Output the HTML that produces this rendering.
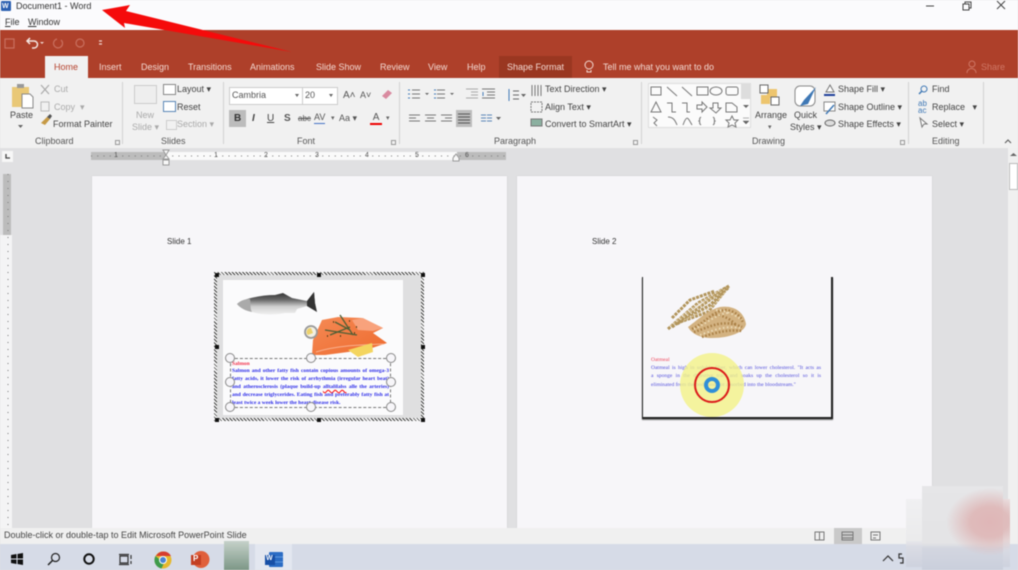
<!DOCTYPE html>
<html><head><meta charset="utf-8"><style>
html,body{margin:0;padding:0}
body{width:1018px;height:570px;overflow:hidden;position:relative;background:#e0e0e2;font-family:"Liberation Sans",sans-serif;font-size:9px;color:#444}
#w{position:absolute;left:0;top:0;width:1018px;height:570px;overflow:hidden;filter:blur(.4px)}
.a{position:absolute;white-space:nowrap;line-height:11px}
.b{position:absolute}
.tab{position:absolute;top:62px;color:#f3d9d2;font-size:9px;line-height:11px;white-space:nowrap}
.g{position:absolute;top:136px;color:#555;font-size:9px;line-height:11px}
.sep{position:absolute;top:82px;width:1px;height:62px;background:#d2d2d2}
.p{position:absolute;top:176px;width:415px;height:352px;background:#f7f6f9;box-shadow:0 0 1px #bbb}
.h{position:absolute;width:8px;height:8px;border-radius:50%;border:1.5px solid #888;background:#f7f6f9}
.k{position:absolute;width:4px;height:4px;background:#111}
.j{display:block;text-align:justify;text-align-last:justify}
.dl{position:absolute;width:5px;height:5px;top:140px;border:1px solid #999;box-sizing:border-box}
svg{position:absolute;overflow:visible}
</style></head><body><div id="w">

<div class="b" style="left:0;top:0;width:1018px;height:30px;background:#fbfbfd"></div>
<div class="b" style="left:1px;top:1px;width:10px;height:10px;background:#2b5fb0;border-radius:1px"></div>
<div class="a" style="left:2px;top:1px;color:#fff;font-size:7px;font-weight:bold">W</div>
<div class="a" style="left:16px;top:1px;font-size:9px;color:#333">Document1 - Word</div>
<div class="a" style="left:5px;top:17px;font-size:9px;color:#333"><u>F</u>ile</div>
<div class="a" style="left:28px;top:17px;font-size:9px;color:#333"><u>W</u>indow</div>
<svg style="left:925px;top:0" width="90" height="12"><path d="M1 6H9" stroke="#444"/><path d="M38 4h6v6h-6zM40 4V2h6v6h-2" fill="none" stroke="#444"/><path d="M72 1l8 8M80 1l-8 8" stroke="#444"/></svg>

<div class="b" style="left:0;top:30px;width:1018px;height:48px;background:#ae402a"></div>
<svg style="left:0;top:34px" width="110" height="18"><rect x="5" y="5" width="9" height="9" fill="none" stroke="#c9705f" stroke-width="1.2"/><path d="M28 7h6a3.500 3.500 0 0 1 0 7h-2M30 4l-3 3 3 3" fill="none" stroke="#f4e6e2" stroke-width="1.500"/><path d="M40 8h4l-2 2z" fill="#f0d5cf"/><path d="M61 6a4.500 4.500 0 1 1-4-1" fill="none" stroke="#c9705f" stroke-width="1.2"/><circle cx="80" cy="9" r="4" fill="none" stroke="#c9705f" stroke-width="1.2"/><path d="M99 7h3M99 10h3" stroke="#f0d5cf" stroke-width="1.3"/></svg>
<div class="b" style="left:45px;top:56px;width:43px;height:22px;background:#f1f1f1"></div>
<div class="tab" style="left:54px;color:#b5432e">Home</div>
<div class="tab" style="left:99px">Insert</div>
<div class="tab" style="left:141px">Design</div>
<div class="tab" style="left:188px">Transitions</div>
<div class="tab" style="left:250px">Animations</div>
<div class="tab" style="left:316px">Slide Show</div>
<div class="tab" style="left:380px">Review</div>
<div class="tab" style="left:428px">View</div>
<div class="tab" style="left:467px">Help</div>
<div class="b" style="left:499px;top:56px;width:73px;height:22px;background:#9a3721"></div>
<div class="tab" style="left:507px">Shape Format</div>
<svg style="left:583px;top:60px" width="12" height="14"><circle cx="6" cy="5" r="4" fill="none" stroke="#f3d9d2"/><path d="M4 10v2h4v-2" fill="none" stroke="#f3d9d2"/></svg>
<div class="tab" style="left:603px">Tell me what you want to do</div>
<svg style="left:966px;top:60px" width="13" height="14"><circle cx="6" cy="4" r="3" fill="none" stroke="#cf7766"/><path d="M1 13c0-6 9-6 9 0" fill="none" stroke="#cf7766"/></svg>
<div class="tab" style="left:981px;color:#cf7766">Share</div>

<div class="b" style="left:0;top:78px;width:1018px;height:70px;background:#f1f1f1"></div>
<div class="sep" style="left:122px"></div><div class="sep" style="left:223px"></div><div class="sep" style="left:399px"></div><div class="sep" style="left:641px"></div><div class="sep" style="left:908px"></div><div class="sep" style="left:983px"></div>

<svg style="left:10px;top:84px" width="24" height="26"><rect x="2" y="3" width="17" height="20" fill="#e9c877"/><rect x="7" y="0" width="7" height="4" fill="#999"/><path d="M12 10h8l3 3v11H12z" fill="#fff" stroke="#888"/></svg>
<div class="a" style="left:10px;top:110px;color:#444">Paste</div>
<svg style="left:18px;top:125px" width="6" height="4"><path d="M0 0h5L2.500 3z" fill="#666"/></svg>
<svg style="left:39px;top:84px" width="14" height="40"><path d="M2 1l8 9M10 1L2 10" stroke="#aaa" stroke-width="1.2"/><rect x="2" y="18" width="8" height="9" fill="none" stroke="#bbb"/><path d="M2 39l6-6 3 2-5 6z" fill="#c69a45"/><path d="M8 33l3-3 2 2-2 3z" fill="#555"/></svg>
<div class="a" style="left:54px;top:84px;color:#aaa">Cut</div>
<div class="a" style="left:54px;top:102px;color:#aaa">Copy &nbsp;▾</div>
<div class="a" style="left:53px;top:119px;color:#444">Format Painter</div>
<div class="g" style="left:35px">Clipboard</div>
<div class="dl" style="left:115px"></div>

<div class="b" style="left:134px;top:85px;width:21px;height:17px;background:#eee;border:1px solid #ccc"></div>
<div class="a" style="left:136px;top:110px;color:#aaa">New</div>
<div class="a" style="left:132px;top:122px;color:#aaa">Slide ▾</div>
<div class="b" style="left:163px;top:84px;width:11px;height:9px;border:1px solid #888;background:#fff"></div>
<div class="a" style="left:177px;top:84px;color:#444">Layout ▾</div>
<div class="b" style="left:163px;top:101px;width:11px;height:9px;border:1px solid #5a87b8;background:#fff"></div>
<div class="a" style="left:177px;top:102px;color:#444">Reset</div>
<div class="b" style="left:166px;top:120px;width:9px;height:8px;border:1px solid #ccc"></div>
<div class="a" style="left:177px;top:119px;color:#aaa">Section ▾</div>
<div class="g" style="left:161px">Slides</div>

<div class="b" style="left:229px;top:87px;width:72px;height:16px;background:#fff;border:1px solid #ccc"></div>
<div class="a" style="left:232px;top:90px;color:#555">Cambria</div>
<div class="b" style="left:302px;top:87px;width:34px;height:16px;background:#fff;border:1px solid #ccc"></div>
<div class="a" style="left:305px;top:90px;color:#555">20</div>
<svg style="left:295px;top:94px" width="40" height="4"><path d="M0 0h4L2 3zM34 0h4l-2 3z" fill="#666"/></svg>
<div class="a" style="left:343px;top:90px;color:#555;font-size:10px">A˄</div>
<div class="a" style="left:360px;top:90px;color:#555;font-size:9px">A˅</div>
<svg style="left:380px;top:88px" width="13" height="13"><path d="M2 8l6-6 4 3-6 6z" fill="#d98aa0"/></svg>
<div class="b" style="left:229px;top:110px;width:17px;height:17px;background:#bcbcbc"></div>
<div class="a" style="left:234px;top:113px;font-weight:bold;color:#333;font-size:10px">B</div>
<div class="a" style="left:252px;top:113px;font-style:italic;font-weight:bold;color:#444;font-size:10px">I</div>
<div class="a" style="left:267px;top:113px;text-decoration:underline;color:#444;font-size:10px">U</div>
<div class="a" style="left:284px;top:113px;font-weight:bold;color:#555;font-size:10px">S</div>
<div class="a" style="left:298px;top:113px;color:#555;text-decoration:line-through;font-size:8px">abc</div>
<div class="a" style="left:314px;top:112px;color:#555;font-size:9px;border-bottom:1px solid #4472c4">AV</div>
<div class="a" style="left:331px;top:113px;color:#666;font-size:7px">▾</div>
<div class="a" style="left:339px;top:113px;color:#555">Aa ▾</div>
<div class="a" style="left:370px;top:112px;color:#555;font-size:10px;border-bottom:2px solid #e00">&nbsp;A&nbsp;</div>
<div class="a" style="left:386px;top:113px;color:#666;font-size:7px">▾</div>
<div class="g" style="left:297px">Font</div>
<div class="dl" style="left:391px"></div>

<svg style="left:406px;top:87px" width="125" height="40" fill="none" stroke="#777">
<path d="M6 3h8M6 7h8M6 11h8M31 3h8M31 7h8M31 11h8"/>
<path d="M2 3h2M2 7h2M2 11h2M28 3h2M28 7h2M28 11h2" stroke="#3f78b5"/>
<path d="M19 6h4l-2 2zM44 6h4l-2 2z" fill="#666" stroke="none"/>
<path d="M60 2h12M65 5h7M65 8h7M60 11h12" stroke="#aaa"/>
<path d="M76 2h13M81 5h8M81 8h8M76 11h13"/><path d="M77 5v4" stroke="#3f78b5"/>
<path d="M3 28h11M3 31h7M3 34h11M19 28h11M21 31h7M19 34h11M35 28h11M39 31h7M35 34h11"/>
</svg>
<div class="b" style="left:456px;top:110px;width:16px;height:17px;background:#bcbcbc"></div>
<svg style="left:458px;top:113px" width="12" height="11"><path d="M0 1h12M0 4h12M0 7h12M0 10h12" stroke="#555"/></svg>
<svg style="left:481px;top:113px" width="22" height="11"><path d="M0 2h5M6 2h5M0 5h5M6 5h5M0 8h5M6 8h5" stroke="#5a87b8"/><path d="M15 4h5l-2.500 3z" fill="#666"/></svg>
<svg style="left:506px;top:88px" width="20" height="14"><path d="M3 1v12" stroke="#3f78b5"/><path d="M7 3h6M7 7h6M7 11h6" stroke="#666"/><path d="M15 6h5l-2.500 3z" fill="#666"/></svg>
<svg style="left:530px;top:83px" width="14" height="46" fill="none" stroke="#777"><path d="M2 2v11M5 2v11M8 2v11M11 2v11"/><rect x="1" y="19" width="11" height="10" stroke-dasharray="2 1"/><rect x="1" y="36" width="11" height="7" fill="#8bb0a0"/></svg>
<div class="a" style="left:545px;top:84px;color:#444">Text Direction ▾</div>
<div class="a" style="left:545px;top:102px;color:#444">Align Text ▾</div>
<div class="a" style="left:545px;top:119px;color:#444">Convert to SmartArt ▾</div>
<div class="g" style="left:494px">Paragraph</div>
<div class="dl" style="left:633px"></div>

<div class="b" style="left:648px;top:83px;width:103px;height:45px;background:#fbfbfb;border:1px solid #ddd;box-sizing:border-box"></div>
<div class="b" style="left:741px;top:84px;width:9px;height:15px;background:#ddd"></div>
<svg style="left:650px;top:85px" width="100" height="44" fill="none" stroke="#777">
<rect x="1" y="2" width="10" height="8"/><path d="M17 2l10 9M32 2l10 9"/><rect x="47" y="2" width="11" height="8"/><ellipse cx="66" cy="6" rx="6" ry="4"/><rect x="76" y="2" width="12" height="8" rx="2"/>
<path d="M1 27l5-10 5 10zM17 18h5v9h4M32 18h5v9h3M47 20h5v-3l5 5-5 5v-3h-5zM63 18h5v5h3l-5 5-6-5h3zM76 27v-9h6l5 4v5z"/>
<path d="M3 32l4 3-3 3 3 3M18 32c5 0 7 3 9 8M33 40c4-11 5-7 9 0M51 32c-3 2 0 3-2 4 2 1-1 2 2 4M63 32c3 2 0 3 2 4-2 1 1 2-2 4M82 31l2 4 4 0-3 3 1 4-4-2-4 2 1-4-3-3 4 0z"/></svg>
<svg style="left:742px;top:100px" width="8" height="28"><path d="M1 5h6L4 8z" fill="#666"/><path d="M1 18h6M1 21h6L4 24z" fill="#666" stroke="#666" stroke-width=".5"/></svg>
<svg style="left:758px;top:84px" width="24" height="24"><rect x="9" y="5" width="10" height="9" fill="#edc56e"/><rect x="3" y="11" width="9" height="9" fill="#edc56e"/><rect x="2" y="1" width="8" height="8" fill="#fff" stroke="#666"/><rect x="13" y="13" width="8" height="8" fill="#fff" stroke="#666"/></svg>
<div class="a" style="left:755px;top:110px;color:#444">Arrange</div>
<div class="a" style="left:768px;top:122px;color:#666;font-size:7px">▾</div>
<svg style="left:794px;top:85px" width="24" height="24"><rect x="1" y="1" width="20" height="20" rx="5" fill="#fff" stroke="#888"/><path d="M22 2L10 15l-4 6 8-2z" fill="#3f78b5"/></svg>
<div class="a" style="left:794px;top:110px;color:#444">Quick</div>
<div class="a" style="left:790px;top:122px;color:#444">Styles ▾</div>
<svg style="left:823px;top:83px" width="14" height="46" fill="none"><path d="M3 9l4-7 4 7z" stroke="#777" fill="#fff"/><path d="M1 12h11" stroke="#1f3f9a" stroke-width="2"/><rect x="1" y="19" width="11" height="9" stroke="#888" fill="#fff"/><path d="M3 31l8-9" stroke="#3f78b5" stroke-width="1.500"/><ellipse cx="7" cy="40" rx="5" ry="3" fill="#ddd" stroke="#666"/></svg>
<div class="a" style="left:838px;top:84px;color:#444">Shape Fill ▾</div>
<div class="a" style="left:838px;top:102px;color:#444">Shape Outline ▾</div>
<div class="a" style="left:838px;top:119px;color:#444">Shape Effects ▾</div>
<div class="g" style="left:752px">Drawing</div>
<div class="dl" style="left:900px"></div>

<svg style="left:917px;top:84px" width="14" height="46" fill="none"><circle cx="7" cy="5" r="3" stroke="#3f78b5"/><path d="M5 7L2 10" stroke="#3f78b5" stroke-width="1.500"/><path d="M3 34l2 9 2-3 3 0z" stroke="#777" fill="#fff"/></svg>
<div class="a" style="left:918px;top:100px;color:#3f78b5;font-size:8px;line-height:7px">ab<br>ac</div>
<div class="a" style="left:932px;top:84px;color:#444">Find</div>
<div class="a" style="left:932px;top:102px;color:#444">Replace &nbsp; ▾</div>
<div class="a" style="left:932px;top:119px;color:#444">Select ▾</div>
<div class="g" style="left:932px">Editing</div>
<svg style="left:1004px;top:139px" width="8" height="5"><path d="M1 4l3-3 3 3" stroke="#555" fill="none"/></svg>

<div class="b" style="left:0;top:148px;width:1018px;height:382px;background:#e0e0e2"></div>
<div class="b" style="left:2px;top:151px;width:11px;height:11px;background:#f7f7f7"></div>
<svg style="left:5px;top:154px" width="6" height="6"><path d="M1 0v4h4" stroke="#444" fill="none" stroke-width="1.300"/></svg>
<div class="b" style="left:91px;top:152px;width:415px;height:8px;background:#fafafa"></div>
<div class="b" style="left:91px;top:152px;width:75px;height:8px;background:#bcbcbc"></div>
<div class="b" style="left:457px;top:152px;width:49px;height:8px;background:#bcbcbc"></div>
<div class="a" style="left:114px;top:151px;font-size:7px;color:#555;line-height:10px">1</div>
<div class="a" style="left:214px;top:151px;font-size:7px;color:#555;line-height:10px">1</div>
<div class="a" style="left:264px;top:151px;font-size:7px;color:#555;line-height:10px">2</div>
<div class="a" style="left:315px;top:151px;font-size:7px;color:#555;line-height:10px">3</div>
<div class="a" style="left:365px;top:151px;font-size:7px;color:#555;line-height:10px">4</div>
<div class="a" style="left:415px;top:151px;font-size:7px;color:#555;line-height:10px">5</div>
<div class="a" style="left:465px;top:151px;font-size:7px;color:#555;line-height:10px">6</div>
<svg style="left:91px;top:155px" width="415" height="2"><path d="M0 1H415" stroke="#777" stroke-dasharray="1 5.250"/></svg>
<svg style="left:162px;top:149px" width="9" height="17"><path d="M1 1h6L4 6zM4 6l3 4H1z" fill="#f8f8f8" stroke="#999"/><rect x="1" y="11" width="6" height="5" fill="#f8f8f8" stroke="#999"/></svg>
<svg style="left:452px;top:153px" width="9" height="9"><path d="M4 1l3 4v3H1V5z" fill="#f8f8f8" stroke="#999"/></svg>

<div class="b" style="left:0;top:235px;width:12px;height:293px;background:#f4f4f5"></div>
<div class="b" style="left:3px;top:174px;width:8px;height:61px;background:#bcbcbc"></div>
<svg style="left:7px;top:174px" width="2" height="354"><path d="M1 0V354" stroke="#777" stroke-dasharray="1 6"/></svg>

<div class="b" style="left:1008px;top:148px;width:10px;height:380px;background:#f0f0f0"></div>
<div class="b" style="left:1009px;top:163px;width:9px;height:27px;background:#fff;border:1px solid #bbb;box-sizing:border-box"></div>
<svg style="left:1010px;top:152px" width="7" height="5"><path d="M0 4l3.500-3 3.500 3z" fill="#666"/></svg>

<div class="p" style="left:92px"></div>
<div class="p" style="left:517px"></div>
<div class="a" style="left:167px;top:236px;font-size:8px;color:#333">Slide 1</div>
<div class="a" style="left:592px;top:236px;font-size:8px;color:#333">Slide 2</div>

<!-- slide 1 -->
<div class="b" style="left:216px;top:274px;width:207px;height:146px;background:#dfdfe0"></div>
<div class="b" style="left:214px;top:272px;width:210px;height:149px;box-sizing:border-box;border:3px solid transparent;border-image:repeating-linear-gradient(45deg,#444 0 1px,#f5f5f5 1px 2.500px) 3"></div>
<div class="k" style="left:215px;top:273px"></div><div class="k" style="left:317px;top:273px"></div><div class="k" style="left:421px;top:273px"></div>
<div class="k" style="left:215px;top:345px"></div><div class="k" style="left:421px;top:345px"></div>
<div class="k" style="left:215px;top:418px"></div><div class="k" style="left:317px;top:418px"></div><div class="k" style="left:421px;top:418px"></div>
<div class="b" style="left:223px;top:280px;width:180px;height:135px;background:#fbfbfc"></div>
<svg style="left:0;top:0" width="1018" height="570"><defs><linearGradient id="f" x1="0" y1="0" x2="0" y2="1"><stop offset="0" stop-color="#2e2e2e"/><stop offset=".35" stop-color="#6a6a6a"/><stop offset=".65" stop-color="#d0d0d0"/><stop offset="1" stop-color="#f0f0f0"/></linearGradient>
<linearGradient id="sm" x1="0" y1="0" x2="1" y2="1"><stop offset="0" stop-color="#f58a55"/><stop offset="1" stop-color="#ee6a2e"/></linearGradient></defs>
<path d="M237 304C245 298 262 295 275 295L283 293 292 298 307 301 314 292 315 303 317 312 307 306 297 309 295 313 285 313C270 316 250 315 237 304z" fill="url(#f)"/>
<path d="M237 304C241 300 246 299 250 299 251 305 250 309 252 312 246 311 240 308 237 304z" fill="#aaa"/>
<path d="M307 301L314 292 315 303 317 312 307 306z" fill="#333"/>
<path d="M312 355L313 340 322 320 338 317 362 318 383 328 373 333 387 343 372 348 348 352 325 355z" fill="url(#sm)"/>
<path d="M352 320L363 318 383 328 373 331 358 330z" fill="#f8a27c"/>
<path d="M316 352C335 346 355 345 384 344" stroke="#f9b18f" fill="none"/>
<path d="M348 350L372 343 373 352 358 357z" fill="#f4d55f"/>
<path d="M325 330L357 335M340 315L353 335M335 322L350 330M330 335L350 327" stroke="#4f5f35" stroke-width="1.300"/>
<path d="M333 322h1M349 321h1M356 327h1M327 336h1M340 336h1M354 333h1" stroke="#331" stroke-width="1.500"/>
<circle cx="311" cy="332" r="6" fill="#f3f0e4" stroke="#999" stroke-width="1.800"/>
<path d="M311 328a4 4 0 0 0-3 7l5-2z" fill="#ecd16d"/>
<!-- wheat -->
<g fill="none">
<path d="M668 329L698 303 729 286M672 327L704 304 729 286M677 324L710 305 729 287M672 318L690 300 715 291M680 322L708 312 725 291" stroke="#b2955c" stroke-width="3" stroke-dasharray="3 1"/>
<path d="M670 326L700 306 727 288M676 320L700 303 722 289M684 320L712 307 726 291" stroke="#dcc79c" stroke-width="1.200" stroke-dasharray="2 2"/>
<path d="M688 327C700 318 708 310 720 307 734 305 744 312 746 324 745 332 730 338 712 338 700 338 692 334 688 327z" fill="#d3b281"/>
<path d="M692 329C706 322 712 312 724 310 734 310 741 316 743 323M694 332C708 328 722 318 742 327M702 337C714 333 728 329 742 331M712 315C720 314 730 318 736 325" stroke="#a97f45" stroke-width="2.500" stroke-dasharray="1.500 2"/>
<path d="M694 329C706 324 716 314 728 313M700 335C712 331 724 325 740 328M716 310C724 310 734 314 742 320" stroke="#ecdcb8" stroke-width="2" stroke-dasharray="1.500 2.500"/>
</g>
</svg>
<div class="b" style="left:230px;top:358px;width:161px;height:50px;border:1px dashed #777;box-sizing:border-box"></div>
<div class="a" style="left:232px;top:360px;font:bold 5.500px/8px 'Liberation Serif',serif;color:#f2304a">Salmon</div>
<div class="a" style="left:232px;top:367px;width:157px;white-space:nowrap;font:bold 5.500px/8px 'Liberation Serif',serif;color:#2a2ae8"><span class="j">Salmon and other fatty fish contain copious amounts of omega-3</span><span class="j">fatty acids, it lower the risk of arrhythmia (irregular heart beat)</span><span class="j">and atherosclerosis (plaque build-up <span style="text-decoration:underline wavy red">alltalilalss</span> alle the arteries)</span><span class="j">and decrease triglycerides. Eating fish and preferably fatty fish at</span><span style="display:block">least twice a week lower the heart disease risk.</span></div>
<div class="h" style="left:225px;top:353px"></div><div class="h" style="left:306px;top:353px"></div><div class="h" style="left:386px;top:353px"></div>
<div class="h" style="left:225px;top:377px"></div><div class="h" style="left:386px;top:377px"></div>
<div class="h" style="left:225px;top:402px"></div><div class="h" style="left:306px;top:402px"></div><div class="h" style="left:386px;top:402px"></div>

<!-- slide 2 -->
<div class="b" style="left:642px;top:277px;width:191px;height:142px;box-sizing:border-box;border:solid #222;border-width:0 2px 2px 1px;box-shadow:0 1px 1px #777"></div>
<div class="a" style="left:651px;top:356px;font:5.500px/8px 'Liberation Serif',serif;color:#ef4a5f">Oatmeal</div>
<div class="a" style="left:651px;top:364px;width:170px;font:5.500px/8.300px 'Liberation Serif',serif;color:#5552dc"><span class="j">Oatmeal is high in soluble fiber, which can lower cholesterol. "It acts as</span><span class="j">a sponge in the digestive tract and soaks up the cholesterol so it is</span><span style="display:block">eliminated from the body and not absorbed into the bloodstream."</span></div>
<div class="b" style="left:680px;top:353px;width:64px;height:64px;border-radius:50%;background:rgba(243,242,135,.8)"></div>
<div class="b" style="left:694px;top:367px;width:36px;height:36px;border-radius:50%;border:2px solid #dc1b1b;box-sizing:border-box"></div>
<div class="b" style="left:704px;top:377px;width:16px;height:16px;border-radius:50%;border:4px solid #2f8fd8;box-sizing:border-box"></div>

<!-- status bar -->
<div class="b" style="left:0;top:528px;width:1018px;height:16px;background:#f0f0f0"></div>
<div class="a" style="left:4px;top:530px;color:#444">Double-click or double-tap to Edit Microsoft PowerPoint Slide</div>
<div class="b" style="left:834px;top:528px;width:28px;height:16px;background:#c9c9c9"></div>
<svg style="left:813px;top:530px" width="80" height="12" fill="none" stroke="#777"><path d="M2 2h9v8H2zM6.500 2v8"/><path d="M29 2h11v8H29zM29 5h11M29 8h11"/><path d="M58 2h9v8h-9zM60 5h5M60 8h3"/></svg>
<div class="b" style="left:0;top:544px;width:1018px;height:26px;background:#d6dbe7"></div>
<svg style="left:11px;top:553px" width="12" height="12"><path d="M0 2l5.500-1v4.500H0zM6.500 1L12 0v5.500H6.500zM0 6.500h5.500V11L0 10zM6.500 6.500H12V12l-5.500-1z" fill="#111"/></svg>
<svg style="left:47px;top:553px" width="14" height="13"><circle cx="8.500" cy="4.500" r="4" fill="none" stroke="#222" stroke-width="1.200"/><path d="M5.500 7.500L1 12" stroke="#222" stroke-width="1.500"/></svg>
<svg style="left:83px;top:553px" width="12" height="12"><circle cx="6" cy="6" r="4.700" fill="none" stroke="#111" stroke-width="2"/></svg>
<svg style="left:119px;top:554px" width="14" height="11" fill="none" stroke="#333" stroke-width="1.200"><path d="M1 2h8v7H1zM0 .5h10M0 10.500h10M12 1v4M12 7v3"/></svg>
<svg style="left:154px;top:551px" width="18" height="18"><circle cx="9" cy="9" r="8.500" fill="#e5b92f"/><path d="M2 5a8.500 8.500 0 0 1 15 0H9z" fill="#d63c30"/><path d="M1.500 5a8.500 8.500 0 0 0 6 12.500L10 12z" fill="#3f9b4b"/><circle cx="9" cy="9" r="4" fill="#fff"/><circle cx="9" cy="9" r="3" fill="#4a84d4"/></svg>
<svg style="left:191px;top:551px" width="19" height="17"><circle cx="10" cy="8.500" r="8.500" fill="#e0603c"/><rect x="0" y="4" width="10" height="10" fill="#c33f23"/></svg>
<div class="a" style="left:193px;top:553px;color:#fff;font:bold 8px/11px 'Liberation Sans',sans-serif">P</div>
<div class="b" style="left:224px;top:541px;width:25px;height:29px;background:linear-gradient(180deg,#c5d2c9,#7d9887)"></div>
<div class="b" style="left:255px;top:544px;width:37px;height:26px;background:#e3e7f0"></div>
<svg style="left:264px;top:551px" width="20" height="17"><rect x="5" y="1" width="14" height="15" rx="1" fill="#2b6cc4"/><path d="M5 6h14M5 11h14" stroke="#5c97e0"/><rect x="1" y="4" width="10" height="10" fill="#174fa6"/></svg>
<div class="a" style="left:266px;top:553px;color:#fff;font:bold 7px/11px 'Liberation Sans',sans-serif">W</div>
<svg style="left:882px;top:553px" width="24" height="12" fill="none" stroke="#333" stroke-width="1.200"><path d="M1 8l5-5 5 5"/><path d="M20 1h-3v4h4v5h-3"/></svg>

<!-- blurred watermark patch -->
<div class="b" style="left:906px;top:499px;width:104px;height:68px;background:radial-gradient(ellipse 48px 32px at 84px 22px,#e0b8b9 0,#dfbdbd 40%,rgba(223,205,205,0) 100%),linear-gradient(180deg,#f0f0f2 0,#ebebec 60%,#dadce4 70%,#ced2de 100%)"></div>
<div class="b" style="left:922px;top:486px;width:81px;height:84px;background:radial-gradient(ellipse 44px 34px at 68px 36px,#dfb6b7 0,#dfbbbb 45%,rgba(223,200,200,0) 100%),linear-gradient(180deg,#e6e6e8 0,#e4e4e6 68%,#d3d6e0 74%,#cacfdc 100%)"></div>

<!-- arrow -->
<svg style="left:0;top:0" width="300" height="60"><path d="M102 10L130 5 126 11 292 52 124 23 125 28z" fill="#f50b0b"/></svg>
</div></body></html>
